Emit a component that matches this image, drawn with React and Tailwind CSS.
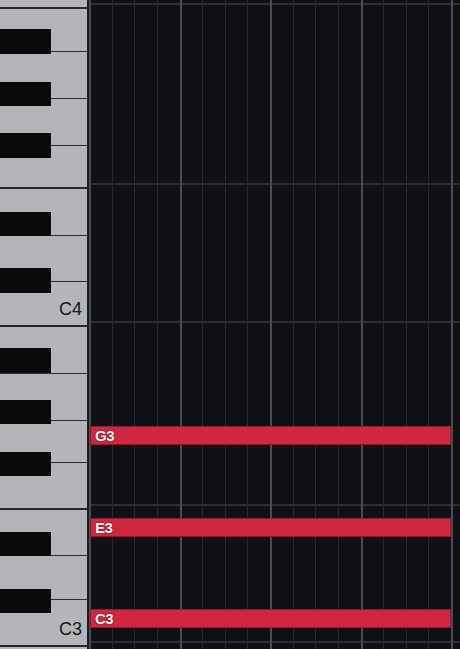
const whiteKeys = [
  { h: 5, full: true },
  { h: 43 },
  { h: 47 },
  { h: 47 },
  { h: 43, full: true },
  { h: 47 },
  { h: 46 },
  { h: 45, full: true, label: "C4" },
  { h: 47 },
  { h: 47 },
  { h: 42 },
  { h: 47, full: true },
  { h: 46 },
  { h: 44 },
  { h: 47, full: true, label: "C3" },
];

const blackKeys = [
  { top: "top-[29px]", h: "h-[25px]" },
  { top: "top-[82px]", h: "h-[24px]" },
  { top: "top-[133px]", h: "h-[25px]" },
  { top: "top-[212px]", h: "h-[24px]" },
  { top: "top-[268px]", h: "h-[25px]" },
  { top: "top-[348px]", h: "h-[25px]" },
  { top: "top-[400px]", h: "h-[24px]" },
  { top: "top-[452px]", h: "h-[24px]" },
  { top: "top-[532px]", h: "h-[24px]" },
  { top: "top-[589px]", h: "h-[24px]" },
];

const notes = [
  { name: "G3", top: "top-[426px]" },
  { name: "E3", top: "top-[518px]" },
  { name: "C3", top: "top-[609px]" },
];

function Keyboard() {
  return (
    <div className="relative w-[87px] h-full shrink-0 flex flex-col bg-[#b4b5b8]">
      {whiteKeys.map((k, i) => (
        <div
          key={i}
          style={{ height: k.h }}
          className={`shrink-0 flex items-end justify-end pr-[5px] pb-[7px] ${
            k.full ? "border-b-2 border-[#26272a]" : "border-b border-[#2c2d30]"
          }`}
        >
          {k.label && (
            <span className="text-[18px] leading-none text-[#15161a]">{k.label}</span>
          )}
        </div>
      ))}
      <div className="flex-1" />
      {blackKeys.map((b, i) => (
        <div key={i} className={`absolute left-0 w-[51px] bg-[#0a0a0b] ${b.top} ${b.h}`} />
      ))}
    </div>
  );
}

function Grid() {
  const cols = Array.from({ length: 17 });
  return (
    <div className="relative flex-1 h-full flex flex-col bg-[#0f1115]">
      <div className="h-[5px] shrink-0 border-b-2 border-[#2d2f34]" />
      <div className="h-[180px] shrink-0 border-b-2 border-[#2d2f34]" />
      <div className="h-[138px] shrink-0 border-b-2 border-[#2d2f34]" />
      <div className="h-[183px] shrink-0 border-b-2 border-[#2d2f34]" />
      <div className="h-[137px] shrink-0 border-b-2 border-[#2d2f34]" />
      <div className="flex-1" />

      <div className="absolute inset-0 flex pointer-events-none">
        {cols.map((_, i) => (
          <div
            key={i}
            className={`w-[22.625px] shrink-0 h-full ${
              i % 4 === 0 ? "border-l-2 border-[#4a4c51]" : "border-l border-[#282a2e]"
            }`}
          />
        ))}
      </div>

      {notes.map((n) => (
        <div
          key={n.name}
          className={`absolute left-[1px] w-[361px] h-[19px] ${n.top} bg-[#d2253f] border border-[#931a2c] pl-[4px] flex items-center`}
        >
          <span className="text-[15px] font-bold leading-none tracking-[-0.5px] text-white [text-shadow:0_0_1px_#4a0a14,0_0_1px_#4a0a14]">
            {n.name}
          </span>
        </div>
      ))}
    </div>
  );
}

export default function App() {
  return (
    <div className="w-[460px] h-[649px] overflow-hidden flex bg-[#0f1115] font-['Liberation_Sans',Arial,sans-serif]">
      <Keyboard />
      <div className="w-[2px] h-full shrink-0 bg-[#1b1c1f]" />
      <Grid />
    </div>
  );
}
